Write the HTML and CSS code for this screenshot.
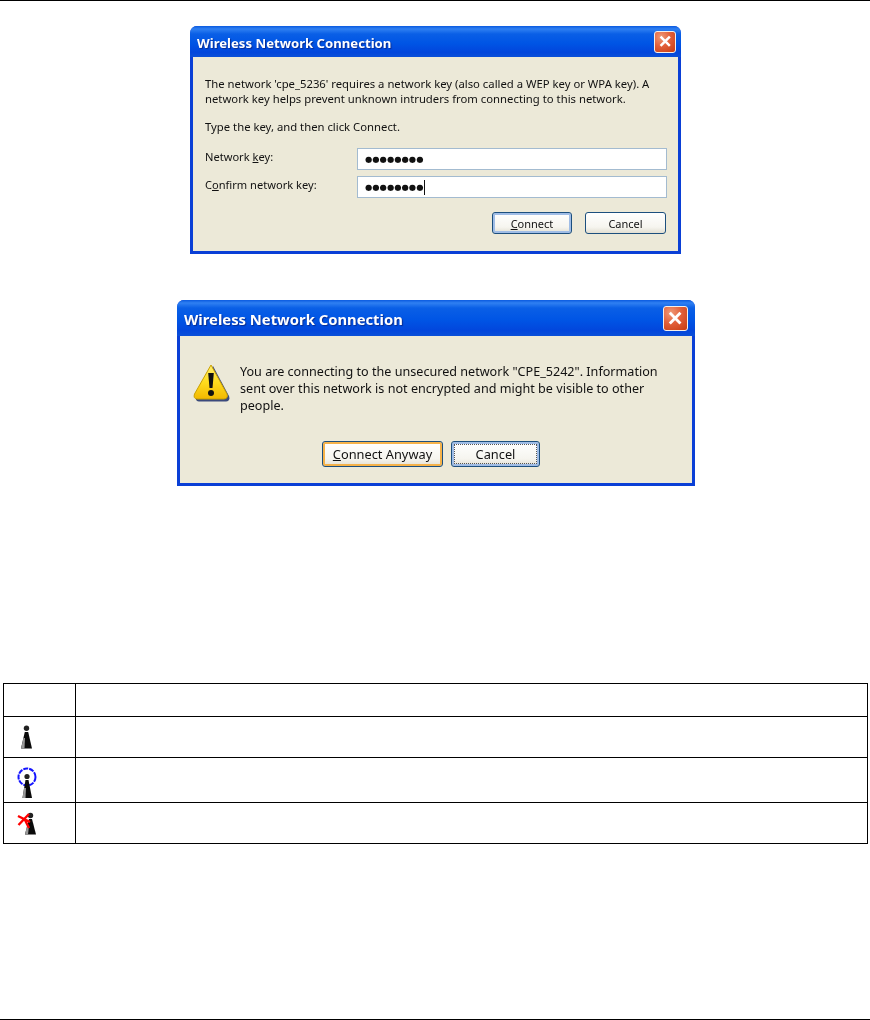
FILE: index.html
```html
<!DOCTYPE html>
<html lang="en">
<head>
<meta charset="utf-8">
<title>Wireless Network Connection</title>
<link rel="stylesheet" href="styles.css">
</head>
<body>
<div class="page">
  <section class="dialog dialog-key">
    <div class="titlebar">
      <span class="title">Wireless Network Connection</span>
      <span class="close"><svg viewBox="0 0 12 12" class="close-x"><path d="M1.5 1.5 10.5 10.5M10.5 1.5 1.5 10.5"/></svg></span>
    </div>
    <div class="body">
      <p class="line">The network 'cpe_5236' requires a network key (also called a WEP key or WPA key). A</p>
      <p class="line">network key helps prevent unknown intruders from connecting to this network.</p>
      <p class="line type-line">Type the key, and then click Connect.</p>
      <div class="field field-first">
        <span class="label">Network <u>k</u>ey:</span>
        <span class="input"><span class="dots">●●●●●●●●</span></span>
      </div>
      <div class="field">
        <span class="label">C<u>o</u>nfirm network key:</span>
        <span class="input"><span class="dots">●●●●●●●●</span><span class="caret"></span></span>
      </div>
      <div class="buttons">
        <span class="btn btn-blue btn-connect"><span><u>C</u>onnect</span></span>
        <span class="btn btn-cancel"><span>Cancel</span></span>
      </div>
    </div>
  </section>

  <section class="dialog dialog-warn">
    <div class="titlebar">
      <span class="title">Wireless Network Connection</span>
      <span class="close"><svg viewBox="0 0 12 12" class="close-x"><path d="M1.5 1.5 10.5 10.5M10.5 1.5 1.5 10.5"/></svg></span>
    </div>
    <div class="body">
      <div class="warn-row">
        <svg class="warn-icon" viewBox="0 0 37 38">
          <path d="M20 2 36 32Q37.500 37 33 37.500H6Q2 37 3 33Z" fill="#3b4a7c"/>
          <defs><linearGradient id="wg" x1="0" y1="0" x2="0" y2="1"><stop offset="0" stop-color="#ffee70"/><stop offset=".5" stop-color="#ffdc1e"/><stop offset="1" stop-color="#f2b800"/></linearGradient></defs>
          <path d="M18 1 34 30Q35.500 34.500 31 35H4Q0 34.500 1.500 30Z" fill="url(#wg)" stroke="#caa000" stroke-width="1"/>
          <path d="M15.200 9h5.600l-1.300 15h-3Z" fill="#111"/>
          <circle cx="18" cy="29" r="3" fill="#111"/>
        </svg>
        <div class="warn-text">
          <p class="line-w">You are connecting to the unsecured network "CPE_5242". Information</p>
          <p class="line-w">sent over this network is not encrypted and might be visible to other</p>
          <p class="line-w">people.</p>
        </div>
      </div>
      <div class="buttons-center">
        <span class="btn btn-orange btn-anyway"><span><u>C</u>onnect Anyway</span></span>
        <span class="btn btn-blue btn-cancel2"><span class="focus">Cancel</span></span>
      </div>
    </div>
  </section>

  <table class="legend">
    <tr class="r1"><td class="c1"></td><td></td></tr>
    <tr class="r2"><td class="c1">
      <svg class="tower" viewBox="0 0 14 25">
        <circle cx="7.500" cy="3.200" r="2.700" fill="#222"/>
        <path d="M5.800 7h3.400l3.800 16.500H2Z" fill="#0a0a0a"/>
        <path d="M4.500 13 2 23.500h3.500L6 13Z" fill="#999"/>
      </svg>
    </td><td></td></tr>
    <tr class="r3"><td class="c1">
      <svg class="tower-ring" viewBox="0 0 22 32">
        <circle cx="11" cy="10" r="8.500" fill="none" stroke="#1414ff" stroke-width="2" stroke-dasharray="5 1"/>
        <circle cx="11" cy="9.500" r="2.600" fill="#222"/>
        <path d="M9.500 13h3l3.500 18H6.500Z" fill="#0a0a0a"/>
        <path d="M8 21 6.500 31H9.500L10 21Z" fill="#999"/>
      </svg>
    </td><td></td></tr>
    <tr class="r4"><td class="c1">
      <svg class="tower-x" viewBox="0 0 20 24">
        <circle cx="13.500" cy="4.500" r="2.700" fill="#222"/>
        <path d="M12 8h3l4 15.500H8Z" fill="#0a0a0a"/>
        <path d="M10 15 8 23.500h3L12 15Z" fill="#999"/>
        <path d="M1 5 13 11M1.500 14 12 3M8 9l4 8" fill="none" stroke="#f00" stroke-width="2.400"/>
      </svg>
    </td><td></td></tr>
  </table>

  <div class="spacer"></div>
  <div class="rule-bottom"></div>
</div>
</body>
</html>
```
FILE: styles.css
```css
* { box-sizing: border-box; }
html, body { margin: 0; padding: 0; background: #fff; }
body { font-family: "Noto Sans", Tahoma, sans-serif; color: #111; }
p { margin: 0; }

.page {
  height: 1020px;
  display: flex;
  flex-direction: column;
  align-items: center;
  border-top: 1px solid #000;
  overflow: hidden;
}

.dialog {
  display: flex;
  flex-direction: column;
  background: #0a3fd6;
  border-radius: 7px 7px 0 0;
  filter: blur(0.3px);
}
.dialog-key { width: 491px; height: 228px; margin: 25px 0 0 1px; }
.dialog-warn { width: 518px; height: 186px; margin: 46px 0 0 2px; }

.titlebar {
  display: flex;
  align-items: center;
  justify-content: space-between;
  border-radius: 7px 7px 0 0;
  background: linear-gradient(180deg, #0a5ae0 0, #2f80f2 3px, #0a5fe6 8px, #0055e5 55%, #0246dc 85%, #0a4fd8 100%);
  padding: 0 5px 0 7px;
}
.dialog-key .titlebar { height: 31px; }
.dialog-warn .titlebar { height: 36px; padding: 0 7px 0 7px; }
.title {
  color: #fff;
  font-weight: 700;
  white-space: nowrap;
  text-shadow: 1px 1px 1px #0a2c90;
  padding-top: 2px;
}
.dialog-key .title { font-size: 13.150px; }
.dialog-warn .title { font-size: 14.800px; }

.close {
  display: flex;
  align-items: center;
  justify-content: center;
  border: 1px solid #f4efe9;
  border-radius: 3px;
  background: radial-gradient(circle at 30% 25%, #ef9a78 0, #e2603a 45%, #c63a10 100%);
}
.dialog-key .close { width: 22px; height: 22px; }
.dialog-warn .close { width: 25px; height: 25px; }
.close-x { width: 62%; height: 62%; }
.close-x path { stroke: #fff; stroke-width: 2.400; fill: none; }

.body {
  flex: 1;
  background: #ece9d8;
  margin: 0 3px 3px;
}
.dialog-key .body { padding: 19px 11px 0 12px; }
.dialog-warn .body { padding: 26px 0 0 13px; }

.line {
  font-size: 11.300px;
  line-height: 15px;
  white-space: nowrap;
}
.type-line { margin-top: 13px; }

.field {
  display: flex;
  align-items: flex-start;
  margin-top: 6px;
}
.field-first { margin-top: 14px; }
.label {
  width: 152px;
  flex: none;
  font-size: 11.100px;
  line-height: 15px;
  padding-top: 1px;
  white-space: nowrap;
}
.input {
  flex: 1;
  height: 22px;
  display: flex;
  align-items: center;
  padding-left: 7px;
  background: #fff;
  border: 1px solid #a3bbd0;
}
.dots {
  font-family: "DejaVu Sans", sans-serif;
  font-size: 8.400px;
  color: #111;
}
.caret { width: 1px; height: 15px; background: #111; margin-left: 1px; }

.btn {
  display: flex;
  align-items: center;
  justify-content: center;
  border: 1px solid #1c4f7e;
  border-radius: 3px;
  background: linear-gradient(180deg, #fff 0, #f6f5ef 70%, #e2dfd2 100%);
  white-space: nowrap;
}
.btn-blue { box-shadow: inset 0 0 0 2px #a0bde6; }
.btn-orange { box-shadow: inset 0 0 0 2px #f5b24a; }

.buttons {
  display: flex;
  justify-content: flex-end;
  gap: 13px;
  margin-top: 14px;
  margin-right: 1px;
}
.buttons .btn { font-size: 11px; height: 22px; }
.btn-connect { width: 80px; }
.btn-cancel { width: 81px; }

.warn-row { display: flex; align-items: flex-start; }
.warn-icon { width: 37px; height: 38px; flex: none; margin-top: 2px; }
.warn-text { margin-left: 10px; margin-top: 0.5px; }
.line-w {
  font-size: 12.600px;
  line-height: 17px;
  white-space: nowrap;
}
.buttons-center {
  display: flex;
  gap: 8px;
  margin-top: 27px;
  margin-left: 129px;
}
.buttons-center .btn { font-size: 12.800px; height: 26px; }
.btn-anyway { width: 121px; }
.btn-cancel2 { width: 89px; }
.focus { display: flex; align-items: center; justify-content: center; width: 83px; height: 20px; border: 1px dotted #555; }

.legend {
  width: 865px;
  margin-top: 197px;
  border-collapse: collapse;
  table-layout: fixed;
}
.legend td { border: 1px solid #000; padding: 0; }
.c1 { width: 72px; }
.r1 { height: 33px; }
.r2 { height: 41px; }
.r3 { height: 45px; }
.r4 { height: 41px; }
.legend svg { display: block; filter: blur(0.4px); }
.tower { width: 14px; height: 25px; margin-left: 15px; }
.tower-ring { width: 22px; height: 32px; margin-left: 12px; margin-top: 6px; }
.tower-x { width: 20px; height: 24px; margin-left: 13px; }

.spacer { flex: 1; }
.rule-bottom { width: 100%; height: 1px; background: #000; flex: none; }
```
